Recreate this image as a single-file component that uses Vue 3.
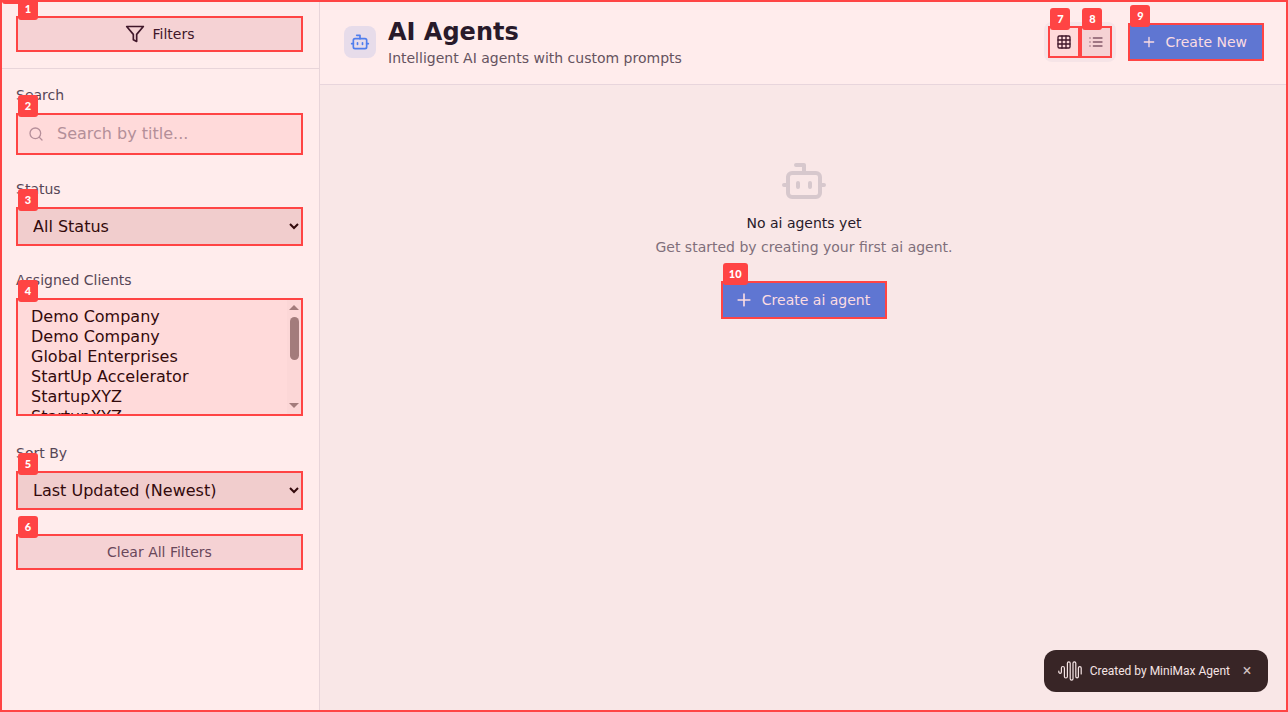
<script setup>
import { ref } from 'vue'

const search = ref('')
const status = ref('all')
const sortBy = ref('updated')
const view = ref('grid')
const bannerOpen = ref(true)
const selectedClients = ref([])

const clients = [
  'Demo Company',
  'Demo Company',
  'Global Enterprises',
  'StartUp Accelerator',
  'StartupXYZ',
  'StartupXYZ',
  'StartUp Accelerator',
  'Global Enterprises',
  'Demo Company',
  'StartupXYZ',
  'Demo Company',
]

function clearFilters() {
  search.value = ''
  status.value = 'all'
  sortBy.value = 'updated'
  selectedClients.value = []
}
</script>

<template>
  <div class="app">
    <aside class="sidebar">
      <div class="sidebar-head">
        <div class="mark">
          <button type="button" class="btn soft dark">
            <svg class="i20" viewBox="0 0 24 24"><path d="M22 3H2l8 9.46V19l4 2v-8.54L22 3z" /></svg>
            Filters
          </button>
          <span class="tag">1</span>
        </div>
      </div>

      <div class="filters">
        <div class="field">
          <label for="search">Search</label>
          <div class="mark">
            <svg class="i16 search-icon" viewBox="0 0 24 24"><circle cx="11" cy="11" r="8" /><path d="m21 21-4.3-4.3" /></svg>
            <input id="search" v-model="search" type="text" placeholder="Search by title..." />
            <span class="tag">2</span>
          </div>
        </div>
        <div class="field">
          <label for="status">Status</label>
          <div class="mark">
            <select id="status" v-model="status" class="dropdown"><option value="all">All Status</option></select>
            <span class="tag">3</span>
          </div>
        </div>
        <div class="field list-field">
          <label for="clients">Assigned Clients</label>
          <div class="mark">
            <select id="clients" v-model="selectedClients" class="list" multiple>
              <option v-for="(name, i) in clients" :key="i" :value="i">{{ name }}</option>
            </select>
            <div class="scrollbar" aria-hidden="true">
              <i class="arrow up"></i>
              <i class="thumb"></i>
              <i class="arrow down"></i>
            </div>
            <span class="tag">4</span>
          </div>
        </div>
        <div class="field">
          <label for="sort">Sort By</label>
          <div class="mark">
            <select id="sort" v-model="sortBy" class="dropdown"><option value="updated">Last Updated (Newest)</option></select>
            <span class="tag">5</span>
          </div>
        </div>
        <div class="mark">
          <button type="button" class="btn soft" @click="clearFilters">Clear All Filters</button>
          <span class="tag">6</span>
        </div>
      </div>
    </aside>

    <main class="content">
      <header class="topbar">
        <div class="bot-box">
          <svg class="i20" viewBox="0 0 24 24"><path d="M12 8V4H8" /><rect width="16" height="12" x="4" y="8" rx="2" /><path d="M2 14h2M20 14h2M15 13v2M9 13v2" /></svg>
        </div>
        <div class="titles">
          <h1>AI Agents</h1>
          <p>Intelligent AI agents with custom prompts</p>
        </div>
        <div class="toggle">
          <div class="mark">
            <button type="button" class="view active" aria-label="Grid view" :aria-pressed="view === 'grid'" @click="view = 'grid'">
              <svg class="i16" viewBox="0 0 24 24"><rect width="18" height="18" x="3" y="3" rx="2" /><path d="M3 9h18M3 15h18M9 3v18M15 3v18" /></svg>
            </button>
            <span class="tag">7</span>
          </div>
          <div class="mark">
            <button type="button" class="view" aria-label="List view" :aria-pressed="view === 'list'" @click="view = 'list'">
              <svg class="i16" viewBox="0 0 24 24"><path d="M8 6h13M8 12h13M8 18h13M3 6h.01M3 12h.01M3 18h.01" /></svg>
            </button>
            <span class="tag">8</span>
          </div>
        </div>
        <div class="mark">
          <button type="button" class="btn primary">
            <svg class="i16" viewBox="0 0 24 24"><path d="M5 12h14M12 5v14" /></svg>
            Create New
          </button>
          <span class="tag">9</span>
        </div>
      </header>

      <section class="empty">
        <svg class="i48" viewBox="0 0 24 24"><path d="M12 8V4H8" /><rect width="16" height="12" x="4" y="8" rx="2" /><path d="M2 14h2M20 14h2M15 13v2M9 13v2" /></svg>
        <h2>No ai agents yet</h2>
        <p>Get started by creating your first ai agent.</p>
        <div class="mark">
          <button type="button" class="btn primary">
            <svg class="i20" viewBox="0 0 24 24"><path d="M5 12h14M12 5v14" /></svg>
            Create ai agent
          </button>
          <span class="tag">10</span>
        </div>
      </section>
    </main>

    <div v-if="bannerOpen" class="banner">
      <svg class="wave" viewBox="0 0 24 20">
        <path d="M.8 10v1a1.3 1.3 0 0 0 2.6 0V7a1.5 1.5 0 0 1 3 0v8.500a1.500 1.500 0 0 0 3 0V2.200a1.400 1.400 0 0 1 2.800 0V17.800a1.400 1.400 0 0 0 2.800 0V2.200a1.400 1.400 0 0 1 2.800 0V15.500a1.300 1.300 0 0 0 2.600 0V7a1.400 1.400 0 0 1 2.800 0V13" />
      </svg>
      <span>Created by MiniMax Agent</span>
      <button type="button" class="close" aria-label="Close" @click="bannerOpen = false">×</button>
    </div>

    <div class="frame"><span class="tag"></span></div>
  </div>
</template>

<style>
body {
  margin: 0;
  background: #f9e7e7;
}
</style>

<style scoped>
* {
  box-sizing: border-box;
}
.app {
  position: relative;
  display: flex;
  min-height: 100vh;
  overflow: hidden;
  font-family: "DejaVu Sans", sans-serif;
  font-size: 14px;
  line-height: 20px;
}
svg {
  display: block;
  flex: none;
  fill: none;
  stroke: currentColor;
  stroke-width: 2;
  stroke-linecap: round;
  stroke-linejoin: round;
}
.i16 {
  width: 16px;
  height: 16px;
}
.i20 {
  width: 20px;
  height: 20px;
}
.i48 {
  width: 48px;
  height: 48px;
}
h1,
h2,
p {
  margin: 0;
}
.mark {
  position: relative;
}
.tag {
  position: absolute;
  top: -18px;
  left: 2px;
  min-width: 20px;
  height: 22px;
  padding: 0 6px;
  border-radius: 3px;
  background: #ff4444;
  color: #fff;
  font: 900 11px/22px Lato, sans-serif;
  text-align: center;
}
button,
input,
select {
  display: block;
  margin: 0;
  border: 2px solid #ff4444;
  border-radius: 0;
  font-family: inherit;
}
.sidebar {
  flex: none;
  width: 320px;
  border-right: 1px solid #e8d5da;
  background: #ffecec;
}
.sidebar-head {
  padding: 16px;
  border-bottom: 1px solid #e8d5da;
}
.filters {
  padding: 16px;
}
.field {
  margin-bottom: 24px;
}
.list-field {
  margin-bottom: 27px;
}
label {
  display: block;
  margin-bottom: 8px;
  color: #564656;
}
.btn {
  display: flex;
  align-items: center;
  justify-content: center;
  gap: 8px;
  height: 36px;
  font-size: 14px;
  line-height: 20px;
}
.soft {
  width: 100%;
  background: #f5d2d4;
  color: #69475a;
}
.dark {
  color: #40172a;
}
.primary {
  height: 38px;
  padding: 0 15px 0 11px;
  background: #5f76d2;
  color: #fbdce2;
}
.search-icon {
  position: absolute;
  top: 13px;
  left: 12px;
  color: #b58f9a;
}
input {
  width: 100%;
  height: 42px;
  padding: 0 12px 2px 39px;
  background: #ffdada;
  color: #330c10;
  font-size: 16px;
}
input::placeholder {
  color: #b38f99;
  opacity: 1;
}
.dropdown {
  width: 100%;
  height: 39px;
  padding: 8px 12px 10px;
  border-width: 1px;
  box-shadow: inset 0 0 0 1px #ff4444;
  background-color: #f1cdcd;
  color: #330a0c;
  font-size: 16px;
}
.list {
  width: 100%;
  height: 118px;
  padding: 7px 11px;
  background: #ffdada;
  color: #330a0c;
  font-size: 16px;
  scrollbar-width: none;
}
.scrollbar {
  position: absolute;
  top: 2px;
  right: 1px;
  bottom: 2px;
  display: flex;
  flex-direction: column;
  align-items: center;
  width: 15px;
  padding: 5px 0 6px;
  border-right: 1px solid #ff4444;
  background: #fcd7d7;
  pointer-events: none;
}
.arrow {
  border: 5px solid transparent;
}
.up {
  border-top: 0;
  border-bottom-color: #a37c7c;
}
.down {
  margin-top: auto;
  border-bottom: 0;
  border-top-color: #a37c7c;
}
.thumb {
  width: 9px;
  height: 43px;
  margin-top: 7px;
  border-radius: 5px;
  background: #a37c7c;
}
.content {
  flex: 1;
  min-width: 0;
}
.topbar {
  display: flex;
  align-items: center;
  gap: 12px;
  padding: 16px 24px;
  border-bottom: 1px solid #e8d5dc;
  background: #ffecec;
}
.bot-box {
  display: grid;
  place-items: center;
  width: 32px;
  height: 32px;
  border-radius: 8px;
  background: #e7dcea;
  color: #507eed;
}
.titles {
  flex: 1;
}
h1 {
  color: #281a2a;
  font-size: 24px;
  line-height: 32px;
}
.titles p {
  color: #65535f;
}
.toggle {
  display: flex;
  padding: 4px;
  border-radius: 8px;
  background: #f6e4e7;
}
.view {
  display: grid;
  place-items: center;
  width: 32px;
  height: 32px;
  padding: 0;
  background: #f5d2d4;
  color: #835868;
}
.view.active {
  background: #ffdada;
  color: #40172a;
}
.empty {
  display: flex;
  flex-direction: column;
  align-items: center;
  padding: 72px 24px;
}
.empty .i48 {
  color: #d7c8cd;
}
h2 {
  margin: 8px 0 4px;
  color: #281a2a;
  font-size: 14px;
  font-weight: 400;
  line-height: 20px;
}
.empty p {
  margin-bottom: 24px;
  color: #806f7b;
}
.banner {
  position: fixed;
  right: 20px;
  bottom: 20px;
  display: flex;
  align-items: center;
  height: 42px;
  padding: 0 14px;
  border-radius: 12px;
  background: #382526;
  color: #f5e4e4;
  font-family: Roboto, sans-serif;
  font-size: 12px;
  font-weight: 400;
}
.wave {
  width: 24px;
  height: 20px;
  margin-right: 8px;
  stroke-width: 1.200;
}
.close {
  width: 14px;
  margin-left: 10px;
  padding: 0;
  border: 0;
  background: none;
  color: #d0c0c0;
  font-size: 16px;
  line-height: 20px;
}
.frame {
  position: absolute;
  inset: 0;
  border: 2px solid #ff4444;
  pointer-events: none;
}
.frame .tag {
  top: -20px;
  left: 0;
}
</style>
